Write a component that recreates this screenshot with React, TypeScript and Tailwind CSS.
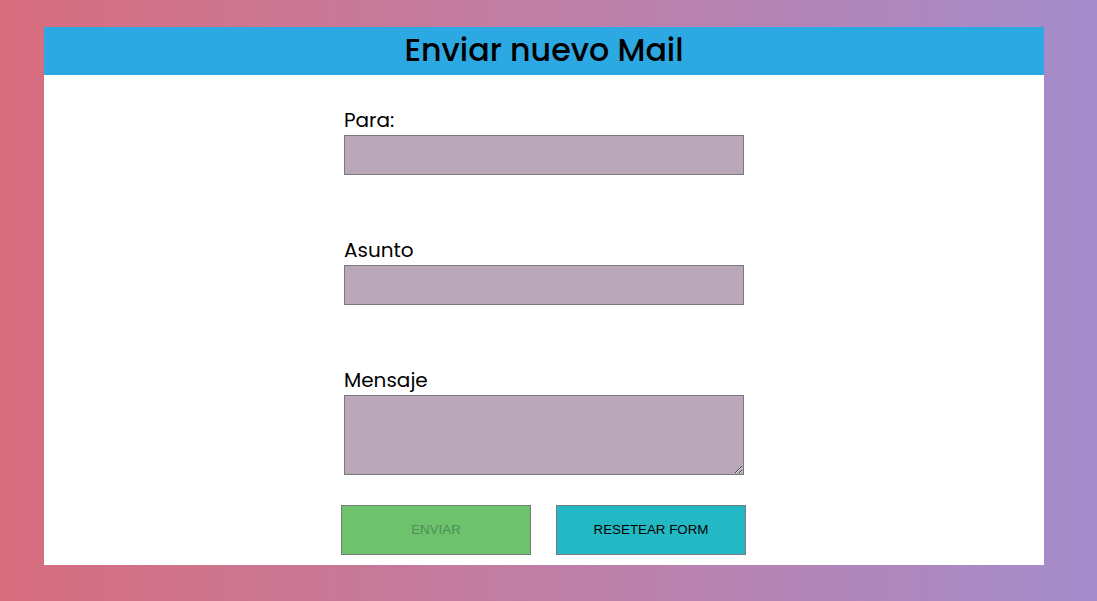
import React from "react";

export default function App() {
  const font = { fontFamily: "Poppins, 'Open Sans', sans-serif" };
  return (
    <div className="w-[1097px] h-[601px] bg-gradient-to-r from-[#d76c7d] to-[#a48ccc] pt-[27px] pl-[44px]">
      <div className="w-[1000px] h-[538px] bg-white flex flex-col" style={font}>
        <div className="h-[48px] bg-[#2ca8e2] flex items-center justify-center">
          <h1 className="text-[31.7px] leading-none text-black font-medium">Enviar nuevo Mail</h1>
        </div>
        <form className="flex flex-col items-center pt-[35px]">
          <div className="w-[400px] flex flex-col">
            <label className="text-[20px] leading-[21px] mb-[4px] text-black font-normal">Para:</label>
            <input className="h-[40px] bg-[#bba7ba] border border-[#7b7b7b]" />
          </div>
          <div className="w-[400px] flex flex-col mt-[65px]">
            <label className="text-[20px] leading-[21px] mb-[4px] text-black font-normal">Asunto</label>
            <input className="h-[40px] bg-[#bba7ba] border border-[#7b7b7b]" />
          </div>
          <div className="w-[400px] flex flex-col mt-[65px]">
            <label className="text-[20px] leading-[21px] mb-[4px] text-black font-normal">Mensaje</label>
            <textarea className="h-[80px] bg-[#bba7ba] border border-[#7b7b7b] resize-y block" />
          </div>
          <div className="flex gap-[25px] mt-[30px] ml-[-1px]" style={{ fontFamily: "Arial, 'Liberation Sans', sans-serif" }}>
            <button type="button" disabled className="w-[190px] h-[50px] bg-[#6dc26e] border border-[#7b7b7b] text-[13.333px] text-[#4e8f53]">ENVIAR</button>
            <button type="button" className="w-[190px] h-[50px] bg-[#22b9c4] border border-[#7b7b7b] text-[13.333px] text-black">RESETEAR FORM</button>
          </div>
        </form>
      </div>
    </div>
  );
}
